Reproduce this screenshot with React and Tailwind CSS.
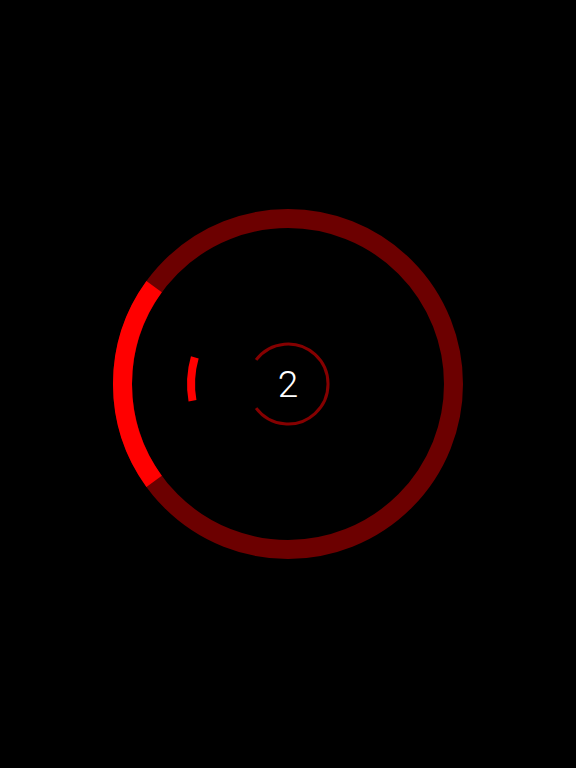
export default function App() {
  return (
    <div className="flex h-[768px] w-full items-center justify-center bg-black">
      <div className="relative h-[360px] w-[360px]">
        <svg width="360" height="360" viewBox="0 0 360 360" className="block">
          <circle cx="180" cy="180" r="165.5" fill="none" stroke="#6c0000" strokeWidth="19" />
          <path d="M 46.1 277.3 A 165.5 165.5 0 0 1 46.1 82.7" fill="none" stroke="#ff0000" strokeWidth="19" />
          <path d="M 84.5 196.8 A 97 97 0 0 1 86.8 153.3" fill="none" stroke="#ff0000" strokeWidth="8" />
          <path d="M 148.1 155.9 A 40 40 0 1 1 148.1 204.1" fill="none" stroke="#850000" strokeWidth="3" />
        </svg>
        <div className="absolute inset-0 flex items-center justify-center">
          <span className="text-[37px] font-light leading-none text-white" style={{ fontFamily: 'Roboto, "Open Sans", sans-serif' }}>
            2
          </span>
        </div>
      </div>
    </div>
  )
}
